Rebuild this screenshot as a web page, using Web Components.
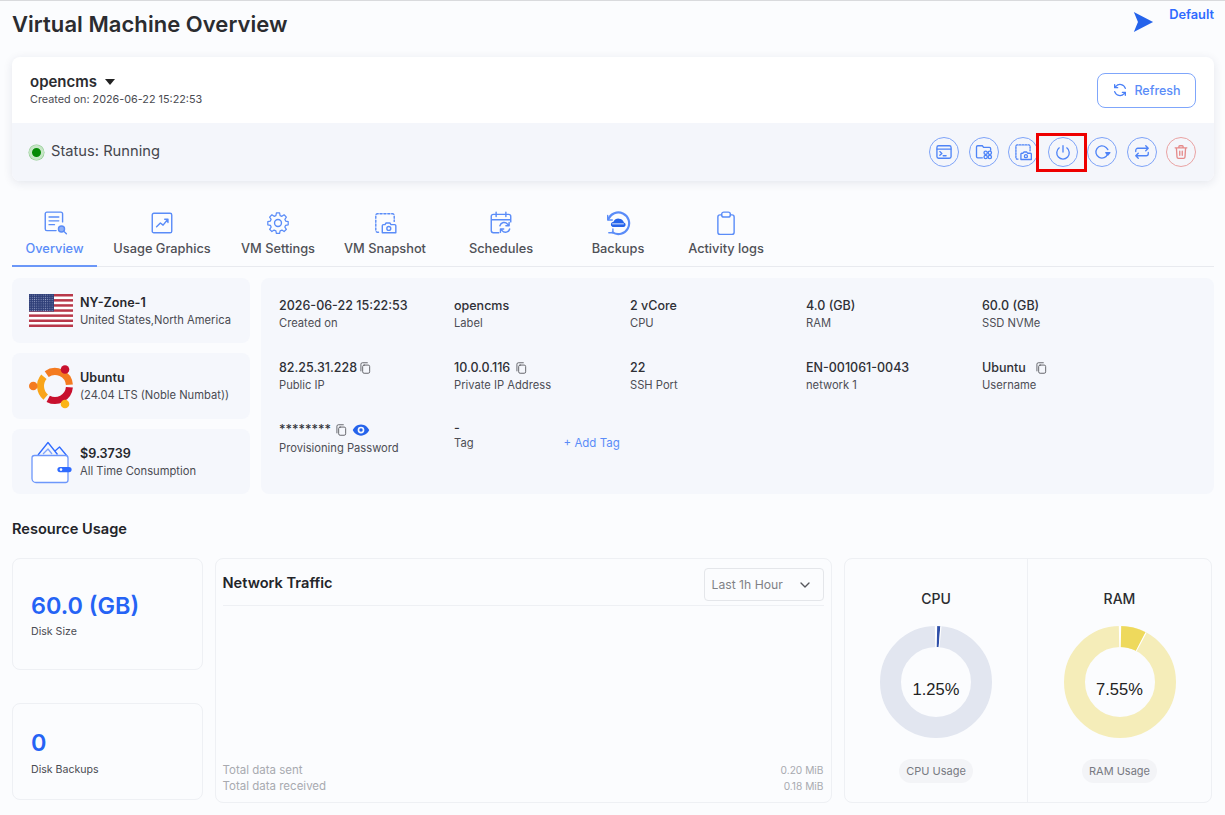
<!DOCTYPE html>
<html lang="en">
<head>
<meta charset="utf-8">
<title>Virtual Machine Overview</title>
<style>
  html, body { margin: 0; background: #fbfcfe; }
  body { font-family: Inter, "Open Sans", sans-serif; color: #2b2c30; overflow: hidden; }
</style>
</head>
<body>
<vm-page>
  <vm-header slot="header" title="Virtual Machine Overview" plan="Default"></vm-header>
  <vm-summary slot="summary" name="opencms" created="Created on: 2026-06-22 15:22:53" status="Status: Running"></vm-summary>
  <vm-tabs slot="tabs"></vm-tabs>

  <vm-info-card slot="side" title="NY-Zone-1" sub="United States,North America"><vm-icon name="flag" w="44" h="33"></vm-icon></vm-info-card>
  <vm-info-card slot="side" title="Ubuntu" sub="(24.04 LTS (Noble Numbat))"><vm-icon name="ubuntu" w="44" h="45"></vm-icon></vm-info-card>
  <vm-info-card slot="side" title="$9.3739" sub="All Time Consumption"><vm-icon name="wallet" w="44" h="44"></vm-icon></vm-info-card>

  <vm-detail slot="detail" value="2026-06-22 15:22:53" label="Created on"></vm-detail>
  <vm-detail slot="detail" value="opencms" label="Label"></vm-detail>
  <vm-detail slot="detail" value="2 vCore" label="CPU"></vm-detail>
  <vm-detail slot="detail" value="4.0 (GB)" label="RAM"></vm-detail>
  <vm-detail slot="detail" value="60.0 (GB)" label="SSD NVMe"></vm-detail>
  <vm-detail slot="detail" value="82.25.31.228" label="Public IP" copy style="--copy-gap: 1px"></vm-detail>
  <vm-detail slot="detail" value="10.0.0.116" label="Private IP Address" copy style="--copy-gap: 4px"></vm-detail>
  <vm-detail slot="detail" value="22" label="SSH Port"></vm-detail>
  <vm-detail slot="detail" value="EN-001061-0043" label="network 1"></vm-detail>
  <vm-detail slot="detail" value="Ubuntu" label="Username" copy style="--copy-gap: 8px"></vm-detail>
  <vm-detail slot="detail" value="********" label="Provisioning Password" copy eye style="--copy-gap: 3px"></vm-detail>
  <vm-detail slot="detail" value="-" label="Tag" action="+ Add Tag"></vm-detail>

  <vm-stat slot="disk" value="60.0 (GB)" label="Disk Size" class="big"></vm-stat>
  <vm-stat slot="disk" value="0" label="Disk Backups" class="small"></vm-stat>
  <vm-traffic slot="traffic"></vm-traffic>
  <vm-donut slot="cpu" title="CPU" value="1.25" track="#e2e6f0" color="#2f4fa8" caption="CPU Usage"></vm-donut>
  <vm-donut slot="ram" title="RAM" value="7.55" track="#f5edb9" color="#eed95c" caption="RAM Usage"></vm-donut>
</vm-page>

<script>
// icon set, all drawn on a 24 box unless the entry says otherwise
const ICONS = {
  send: `<path fill="#2563eb" stroke="none" d="M2 1 L23 12 L2 23 L6.500 12 Z"/>`,
  refresh: `<path d="M20 9.500A8.300 8.300 0 0 0 5.800 6.600L4 8.500M4 4v4.500h4.500M4 14.500a8.300 8.300 0 0 0 14.200 2.900l1.800-1.900M20 20v-4.500h-4.500"/>`,
  console: `<rect x="3.500" y="4.500" width="17" height="15" rx="2"/><path d="M3.500 8.500h17M7 11.500l2.500 2.200L7 16M11 16.500h3.500"/>`,
  folder: `<path d="M20 10V8a1.500 1.500 0 0 0-1.500-1.500H11.500L10 4.500H4.500A1.500 1.500 0 0 0 3 6v11.500A1.500 1.500 0 0 0 4.500 19H10"/><circle cx="14" cy="13" r="2"/><circle cx="19" cy="13" r="2"/><circle cx="14" cy="18" r="2"/><circle cx="19" cy="18" r="2"/>`,
  snapshot: `<path stroke-dasharray="2 1.600" d="M6 20.500H5A1.500 1.500 0 0 1 3.500 19V5A1.500 1.500 0 0 1 5 3.500h14A1.500 1.500 0 0 1 20.500 5V10.500"/><path d="M9.500 21v-6.500a1 1 0 0 1 1-1H12l1-1.500h3.500l1 1.500H21a1 1 0 0 1 1 1V21z"/><circle cx="15.500" cy="17" r="1.800"/>`,
  power: `<path d="M12 4.500v7.500M7.500 7a7.500 7.500 0 1 0 9 0"/>`,
  restart: `<path d="M18.800 14.500A7.300 7.300 0 1 1 16.800 6.500L19 9"/><path fill="currentColor" d="M16.500 12.800h5l-2.500 3z"/>`,
  swap: `<path d="M4.500 11.500V10a2.500 2.500 0 0 1 2.500-2.500h12.500M16.500 4.500l3 3-3 3M19.500 12.500V14a2.500 2.500 0 0 1-2.500 2.500H4.500M7.500 13.500l-3 3 3 3"/>`,
  trash: `<path d="M5 7h14M9.500 7V5.500a1 1 0 0 1 1-1h3a1 1 0 0 1 1 1V7M6.500 7l.7 11a1.800 1.800 0 0 0 1.800 1.700h6a1.800 1.800 0 0 0 1.800-1.700l.7-11M10.500 11v5M13.500 11v5"/>`,
  overview: `<path d="M19 11V3.500A1.500 1.500 0 0 0 17.500 2H4.500A1.500 1.500 0 0 0 3 3.500v14A1.500 1.500 0 0 0 4.500 19H13M6.500 6.500h9M6.500 10h9M6.500 13.500h5"/><circle cx="18" cy="17.500" r="2.800" fill="#2563eb" fill-opacity=".5"/><path d="M20 19.500l2.500 2.500"/>`,
  chart: `<rect x="3" y="3" width="18" height="18" rx="1.500"/><path d="M7 15.500l3.500-3.500 2.500 2 4-5M14.500 8.500H17.500V11.500"/>`,
  gear: `<circle cx="12" cy="12" r="3.200"/><path d="M10.300 2.500h3.400l.5 2.700 1.900.8 2.300-1.600 2.400 2.400-1.600 2.300.8 1.900 2.700.5v3.400l-2.700.5-.8 1.900 1.600 2.300-2.400 2.400-2.300-1.600-1.900.8-.5 2.700h-3.400l-.5-2.700-1.900-.8-2.300 1.600-2.400-2.400 1.600-2.300-.8-1.900-2.700-.5v-3.400l2.700-.5.8-1.900-1.600-2.300 2.400-2.400 2.300 1.600 1.900-.8z" transform="translate(12 12) scale(.88) translate(-12 -13)"/>`,
  calendar: `<path d="M10 21H5a2 2 0 0 1-2-2V6a2 2 0 0 1 2-2h14a2 2 0 0 1 2 2v5M3 9h18M7.500 2v4M16.500 2v4"/><path d="M11 14.500a4 4 0 0 1 7-1.500l1 1M19.500 11.500V14.500H16.500M20 17.500a4 4 0 0 1-7 1.500l-1-1M11.500 20.500V17.500H14.500"/>`,
  backup: `<g stroke-width="2"><path d="M3 8.500A10 10 0 1 1 7 20.700"/><path d="M2.500 5v4.200h4.200M3.500 21h3.800v-3.500" stroke-width="1.300"/></g><path fill="#2563eb" stroke="none" d="M7 15.800h10a2.200 2.200 0 0 0 .5-4.300A5.300 5.300 0 0 0 7.800 10.800 2.600 2.600 0 0 0 7 15.800z"/><path d="M7 12.800h10" stroke="#fff" stroke-width=".8"/>`,
  clipboard: `<path d="M8 4.500H6.500A2 2 0 0 0 4.500 6.500v14A2 2 0 0 0 6.500 22.500h11a2 2 0 0 0 2-2v-14a2 2 0 0 0-2-2H16"/><rect x="8" y="2" width="8" height="4.500" rx="2"/>`,
  copy: `<rect x="8" y="7" width="12" height="14" rx="2.500"/><path d="M5 17V5.500A2.500 2.500 0 0 1 7.500 3H16"/>`,
  eye: `<path fill="#2563eb" stroke="none" fill-rule="evenodd" d="M12 4.500C6.500 4.500 2.500 8.500 1 12c1.500 3.500 5.500 7.500 11 7.500s9.500-4 11-7.500c-1.500-3.500-5.500-7.500-11-7.500zm0 3a4.500 4.500 0 1 1 0 9 4.500 4.500 0 0 1 0-9z"/><circle cx="12" cy="12" r="2.300" fill="#2563eb" stroke="none"/>`,
  chevron: `<path d="M6 9l6 6 6-6"/>`
};

// raster-like brand pictures, each with its own viewBox
const PICTURES = {
  flag: { box: '0 0 44 33', svg: `
    <defs><pattern id="st" width="2.200" height="2.200" patternUnits="userSpaceOnUse"><rect width="2.200" height="2.200" fill="#2f3f78"/><circle cx="1.100" cy="1.100" r=".5" fill="#9aa4c8"/></pattern></defs>
    <rect width="44" height="33" fill="#fff"/>
    <g fill="#b8384a"><rect y="0" width="44" height="2.500"/><rect y="5.100" width="44" height="2.500"/><rect y="10.200" width="44" height="2.500"/><rect y="15.300" width="44" height="2.500"/><rect y="20.400" width="44" height="2.500"/><rect y="25.500" width="44" height="2.500"/><rect y="30.500" width="44" height="2.500"/></g>
    <rect width="25" height="17.500" fill="url(#st)"/>` },
  ubuntu: { box: '0 0 44 45', svg: `
    <g fill="none" stroke-width="7">
      <path stroke="#f47b20" d="M17.700 10.100A14.500 14.500 0 0 1 40.400 20.700"/>
      <path stroke="#f9a51a" d="M14.900 12.700A14.500 14.500 0 0 0 16.700 33.100"/>
      <path stroke="#c8102e" d="M19.200 34.800A14.500 14.500 0 0 0 40.400 23.300"/>
    </g>
    <circle cx="36" cy="5.500" r="4.300" fill="#c8102e"/>
    <circle cx="4.300" cy="22" r="4.300" fill="#f47b20"/>
    <circle cx="36" cy="40" r="4.300" fill="#fbb416"/>` },
  wallet: { box: '0 0 44 44', svg: `
    <g fill="none" stroke="#2f6bff" stroke-width="1.300" stroke-linejoin="round">
      <path d="M9 15L19 2.500l9.500 12M26 11l4.500-4 7.500 9"/>
      <path d="M14 14l5-5 4 5" stroke-opacity=".6"/>
      <path d="M3 18a2.500 2.500 0 0 1 2.500-2.500h31A2.500 2.500 0 0 1 39 18v22a2.500 2.500 0 0 1-2.500 2.500H7a4 4 0 0 1-4-4z" fill="#fff" stroke="#6d97fb"/>
    </g>
    <path d="M31 27h9a2.600 2.600 0 0 1 0 5.200h-9a2.600 2.600 0 0 1 0-5.200z" fill="#2f6bff"/>
    <circle cx="32" cy="29.600" r="1.300" fill="#fff"/>` }
};

class VmIcon extends HTMLElement {
  connectedCallback() {
    const name = this.getAttribute('name');
    const w = this.getAttribute('w') || this.getAttribute('size') || 24;
    const h = this.getAttribute('h') || this.getAttribute('size') || 24;
    const sw = this.getAttribute('sw') || 1.6;
    const pic = PICTURES[name];
    this.attachShadow({ mode: 'open' }).innerHTML = `
      <style>:host { display: inline-flex; flex: none; line-height: 0; } svg { display: block; }</style>
      ${pic
        ? `<svg width="${w}" height="${h}" viewBox="${pic.box}">${pic.svg}</svg>`
        : `<svg width="${w}" height="${h}" viewBox="0 0 24 24" fill="none" stroke="currentColor" stroke-width="${sw}" stroke-linecap="round" stroke-linejoin="round">${ICONS[name]}</svg>`}
    `;
  }
}
customElements.define('vm-icon', VmIcon);

// page skeleton, everything else is slotted in here
class VmPage extends HTMLElement {
  constructor() {
    super();
    this.attachShadow({ mode: 'open' }).innerHTML = `
      <style>
        :host { display: block; border-top: 1px solid #d9dadd; padding: 0 11px 0 12px; height: 814px; box-sizing: border-box; }
        .info { display: grid; grid-template-columns: 238px 1fr; column-gap: 11px; margin-top: 11px; height: 216px; }
        .side { display: grid; grid-template-rows: 65px 66px 65px; row-gap: 10px; }
        .detail { display: grid; grid-template-columns: 175px repeat(4, 176px); grid-auto-rows: 62px; align-content: start;
          padding: 19px 0 0 18px; background: #f5f7fc; border-radius: 8px; }
        h2 { font-size: 14.600px; line-height: 20px; font-weight: 600; margin: 25px 0 19px; color: #232429; }
        .usage { display: grid; grid-template-columns: 191px 617px 368px; column-gap: 12px; height: 245px; }
        .disk { display: flex; flex-direction: column; gap: 33px; }
        .donuts { display: grid; grid-template-columns: 183px 1fr; border: 1.500px solid #eef0f4; border-radius: 8px; }
        .donuts slot[name="cpu"]::slotted(*) { border-right: 1.500px solid #eef0f4; }
      </style>
      <slot name="header"></slot>
      <slot name="summary"></slot>
      <slot name="tabs"></slot>
      <div class="info">
        <div class="side"><slot name="side"></slot></div>
        <div class="detail"><slot name="detail"></slot></div>
      </div>
      <h2>Resource Usage</h2>
      <div class="usage">
        <div class="disk"><slot name="disk"></slot></div>
        <slot name="traffic"></slot>
        <div class="donuts"><slot name="cpu"></slot><slot name="ram"></slot></div>
      </div>
    `;
  }
}
customElements.define('vm-page', VmPage);

class VmHeader extends HTMLElement {
  connectedCallback() {
    this.attachShadow({ mode: 'open' }).innerHTML = `
      <style>
        :host { display: flex; justify-content: space-between; height: 56px; }
        h1 { margin: 9px 0 0; font-size: 22px; line-height: 28px; font-weight: 600; letter-spacing: .05px; color: #2b2c30; }
        .plan { display: flex; align-items: flex-start; gap: 15px; padding: 9px 0 0; color: #2f6bff; font-size: 12.800px; font-weight: 600; }
        .plan span { line-height: 10px; }
      </style>
      <h1>${this.getAttribute('title')}</h1>
      <div class="plan"><vm-icon name="send" w="22" h="24"></vm-icon><span>${this.getAttribute('plan')}</span></div>
    `;
  }
}
customElements.define('vm-header', VmHeader);

class VmSummary extends HTMLElement {
  connectedCallback() {
    const actions = ['console', 'folder', 'snapshot', 'power', 'restart', 'swap', 'trash'];
    this.attachShadow({ mode: 'open' }).innerHTML = `
      <style>
        :host { display: block; height: 124px; border-radius: 8px; background: #fff; overflow: hidden; box-shadow: 0 2px 10px rgba(30, 40, 80, .1); }
        .top { height: 66px; display: flex; justify-content: space-between; align-items: center; padding: 0 18px; box-sizing: border-box; }
        .name { font-size: 15px; line-height: 20px; font-weight: 600; color: #2b2c30; display: flex; align-items: center; gap: 8px; }
        .name i { border: 5px solid transparent; border-top: 6px solid #222; border-bottom: 0; width: 0; height: 0; }
        .created { font-size: 10.800px; line-height: 16px; color: #4a4b52; }
        .refresh { display: flex; align-items: center; justify-content: center; gap: 6px; width: 99px; height: 35px; box-sizing: border-box;
          border: 1.500px solid #7fa6fb; border-radius: 8px; color: #5a8cf8; font-size: 12.500px; font-weight: 500; }
        .refresh vm-icon { color: #4a80f7; }
        .bottom { height: 58px; background: #f4f6fb; display: flex; justify-content: space-between; align-items: center; padding: 0 18px; }
        .status { display: flex; align-items: center; gap: 7px; font-size: 14.700px; color: #45464d; margin: -2px 0 0 -1px; line-height: 18px; }
        .dot { width: 9px; height: 9px; border-radius: 50%; background: #068a06; border: 3px solid #c6e6c6; box-shadow: 0 0 0 .5px #8cc98c; margin-top: 2px; }
        .actions { display: flex; gap: 9.500px; }
        .btn { position: relative; width: 30px; height: 30px; box-sizing: border-box; border: 1.500px solid #7fa4f8; border-radius: 50%;
          display: flex; align-items: center; justify-content: center; color: #4f84f7; }
        .btn.trash { border-color: #eaa3a3; color: #e58a8a; }
        .btn.power::after { content: ""; position: absolute; left: -12.500px; right: -10.500px; top: -5.500px; bottom: -5.500px; border: 3px solid #ee0000; }
      </style>
      <div class="top">
        <div>
          <div class="name">${this.getAttribute('name')}<i></i></div>
          <div class="created">${this.getAttribute('created')}</div>
        </div>
        <div class="refresh"><vm-icon name="refresh" size="16" sw="2"></vm-icon>Refresh</div>
      </div>
      <div class="bottom">
        <div class="status"><span class="dot"></span>${this.getAttribute('status')}</div>
        <div class="actions">
          ${actions.map(a => `<div class="btn ${a}"><vm-icon name="${a}" size="20" sw="1.600"></vm-icon></div>`).join('')}
        </div>
      </div>
    `;
  }
}
customElements.define('vm-summary', VmSummary);

class VmTabs extends HTMLElement {
  connectedCallback() {
    const tabs = [
      ['overview', 'Overview', 85], ['chart', 'Usage Graphics', 130], ['gear', 'VM Settings', 102],
      ['snapshot', 'VM Snapshot', 112], ['calendar', 'Schedules', 120], ['backup', 'Backups', 114], ['clipboard', 'Activity logs', 102]
    ];
    this.attachShadow({ mode: 'open' }).innerHTML = `
      <style>
        :host { display: flex; height: 86px; box-sizing: border-box; padding-top: 29px; border-bottom: 1px solid #e8eaef; }
        .tab { display: flex; flex-direction: column; align-items: center; gap: 4px; box-sizing: border-box; height: 57px; font-size: 12.800px; line-height: 18px; color: #4f5056; font-weight: 450; }
        .tab vm-icon { color: #5a8cf8; }
        .tab.on { color: #5a8cf8; border-bottom: 2px solid #6b97f8; }
      </style>
      ${tabs.map((t, i) => `<div class="tab ${i ? '' : 'on'}" style="width:${t[2]}px"><vm-icon name="${t[0]}" size="26" sw="1.300"></vm-icon>${t[1]}</div>`).join('')}
    `;
  }
}
customElements.define('vm-tabs', VmTabs);

class VmInfoCard extends HTMLElement {
  connectedCallback() {
    this.attachShadow({ mode: 'open' }).innerHTML = `
      <style>
        :host { display: flex; align-items: center; gap: 7px; padding: 0 0 0 17px; background: #f5f7fc; border-radius: 8px; }
        .t { font-size: 12.600px; line-height: 18px; font-weight: 600; color: #26272c; }
        .s { font-size: 11.200px; line-height: 16px; color: #4a4b52; white-space: nowrap; }
        .pic { width: 44px; display: flex; justify-content: center; }
      </style>
      <div class="pic"><slot></slot></div>
      <div><div class="t">${this.getAttribute('title')}</div><div class="s">${this.getAttribute('sub')}</div></div>
    `;
  }
}
customElements.define('vm-info-card', VmInfoCard);

class VmDetail extends HTMLElement {
  connectedCallback() {
    const action = this.getAttribute('action');
    this.attachShadow({ mode: 'open' }).innerHTML = `
      <style>
        :host { display: block; }
        .v { display: flex; align-items: center; gap: var(--copy-gap, 7px); font-size: 12.500px; line-height: 18px; font-weight: 500; color: #2f3036; white-space: nowrap; }
        .v vm-icon { color: #55565c; }
        .v vm-icon.eye { margin-left: 1px; }
        .l { font-size: 11.200px; line-height: 17px; color: #4d4e55; white-space: nowrap; display: flex; }
        .l a { color: #5a8cf8; margin-left: 90px; font-size: 11.500px; }
        :host([eye]) .l { margin-top: 1px; }
        :host([action]) .v { margin-top: -1px; line-height: 16px; }
        :host([action]) .l { margin-top: -1px; }
      </style>
      <div class="v">${this.getAttribute('value')}
        ${this.hasAttribute('copy') ? '<vm-icon name="copy" size="14" sw="1.500"></vm-icon>' : ''}
        ${this.hasAttribute('eye') ? '<vm-icon class="eye" name="eye" size="18"></vm-icon>' : ''}
      </div>
      <div class="l">${this.getAttribute('label')}${action ? `<a>${action}</a>` : ''}</div>
    `;
  }
}
customElements.define('vm-detail', VmDetail);

class VmStat extends HTMLElement {
  connectedCallback() {
    this.attachShadow({ mode: 'open' }).innerHTML = `
      <style>
        :host { display: block; box-sizing: border-box; border: 1.500px solid #eef0f4; border-radius: 8px; padding: 32px 18px 0; height: 112px; }
        :host(.small) { height: 97px; padding-top: 24px; }
        .v { font-size: 23.400px; line-height: 30px; font-weight: 600; color: #2563f5; }
        .l { font-size: 10.600px; line-height: 18px; color: #4a4b52; margin-top: 2px; }
        :host(.small) .l { margin-top: 3px; }
      </style>
      <div class="v">${this.getAttribute('value')}</div>
      <div class="l">${this.getAttribute('label')}</div>
    `;
  }
}
customElements.define('vm-stat', VmStat);

class VmTraffic extends HTMLElement {
  connectedCallback() {
    this.attachShadow({ mode: 'open' }).innerHTML = `
      <style>
        :host { display: flex; flex-direction: column; box-sizing: border-box; border: 1.500px solid #eef0f4; border-radius: 8px; padding: 9px 7.500px 8px 6.500px; }
        .head { display: flex; justify-content: space-between; align-items: center; padding-bottom: 4px; border-bottom: 1.500px solid #eef0f4; }
        .title { font-size: 14.600px; font-weight: 600; color: #232429; align-self: flex-start; line-height: 30px; }
        .select { display: flex; align-items: center; justify-content: space-between; width: 120px; height: 33px; box-sizing: border-box; padding: 0 10px 0 7px;
          border: 1.500px solid #e4e6ea; border-radius: 4px; font-size: 12.200px; color: #808186; }
        .select vm-icon { color: #55565c; }
        .body { flex: 1; }
        .row { display: flex; justify-content: space-between; font-size: 11.500px; line-height: 16px; color: #a8aab0; }
        .row span + span { font-size: 10.200px; }
      </style>
      <div class="head">
        <div class="title">Network Traffic</div>
        <div class="select">Last 1h Hour<vm-icon name="chevron" size="16" sw="2"></vm-icon></div>
      </div>
      <div class="body"></div>
      <div class="row"><span>Total data sent</span><span>0.20 MiB</span></div>
      <div class="row"><span>Total data received</span><span>0.18 MiB</span></div>
    `;
  }
}
customElements.define('vm-traffic', VmTraffic);

class VmDonut extends HTMLElement {
  connectedCallback() {
    const value = parseFloat(this.getAttribute('value'));
    this.attachShadow({ mode: 'open' }).innerHTML = `
      <style>
        :host { display: flex; flex-direction: column; align-items: center; font-family: Inter, sans-serif; }
        .t { margin-top: 30px; font-size: 14px; line-height: 20px; font-weight: 450; color: #2b2c30; }
        .ring { position: relative; width: 112px; height: 112px; margin-top: 17px; }
        svg { display: block; }
        .pct { position: absolute; inset: 14px 0 0; display: flex; align-items: center; justify-content: center;
          font: 16.500px "Liberation Sans", Arial, sans-serif; color: #222; }
        .cap { margin-top: 21px; height: 24px; padding: 0 7px; border-radius: 12px; background: #f3f4f7; font-size: 11px; line-height: 24px; color: #787a82; }
      </style>
      <div class="t">${this.getAttribute('title')}</div>
      <div class="ring">
        <svg width="112" height="112" viewBox="0 0 112 112">
          <g transform="rotate(-90 56 56)" fill="none" stroke-width="21">
            <circle cx="56" cy="56" r="45.500" stroke="${this.getAttribute('track')}"/>
            <circle cx="56" cy="56" r="45.500" pathLength="100" stroke="${this.getAttribute('color')}" stroke-dasharray="${value} ${100 - value}"/>
            <circle cx="56" cy="56" r="45.500" pathLength="100" stroke="#fff" stroke-dasharray=".35 ${value - .35} .35 ${99.3 - value}"/>
          </g>
        </svg>
        <div class="pct">${value.toFixed(2)}%</div>
      </div>
      <div class="cap">${this.getAttribute('caption')}</div>
    `;
  }
}
customElements.define('vm-donut', VmDonut);
</script>
</body>
</html>
